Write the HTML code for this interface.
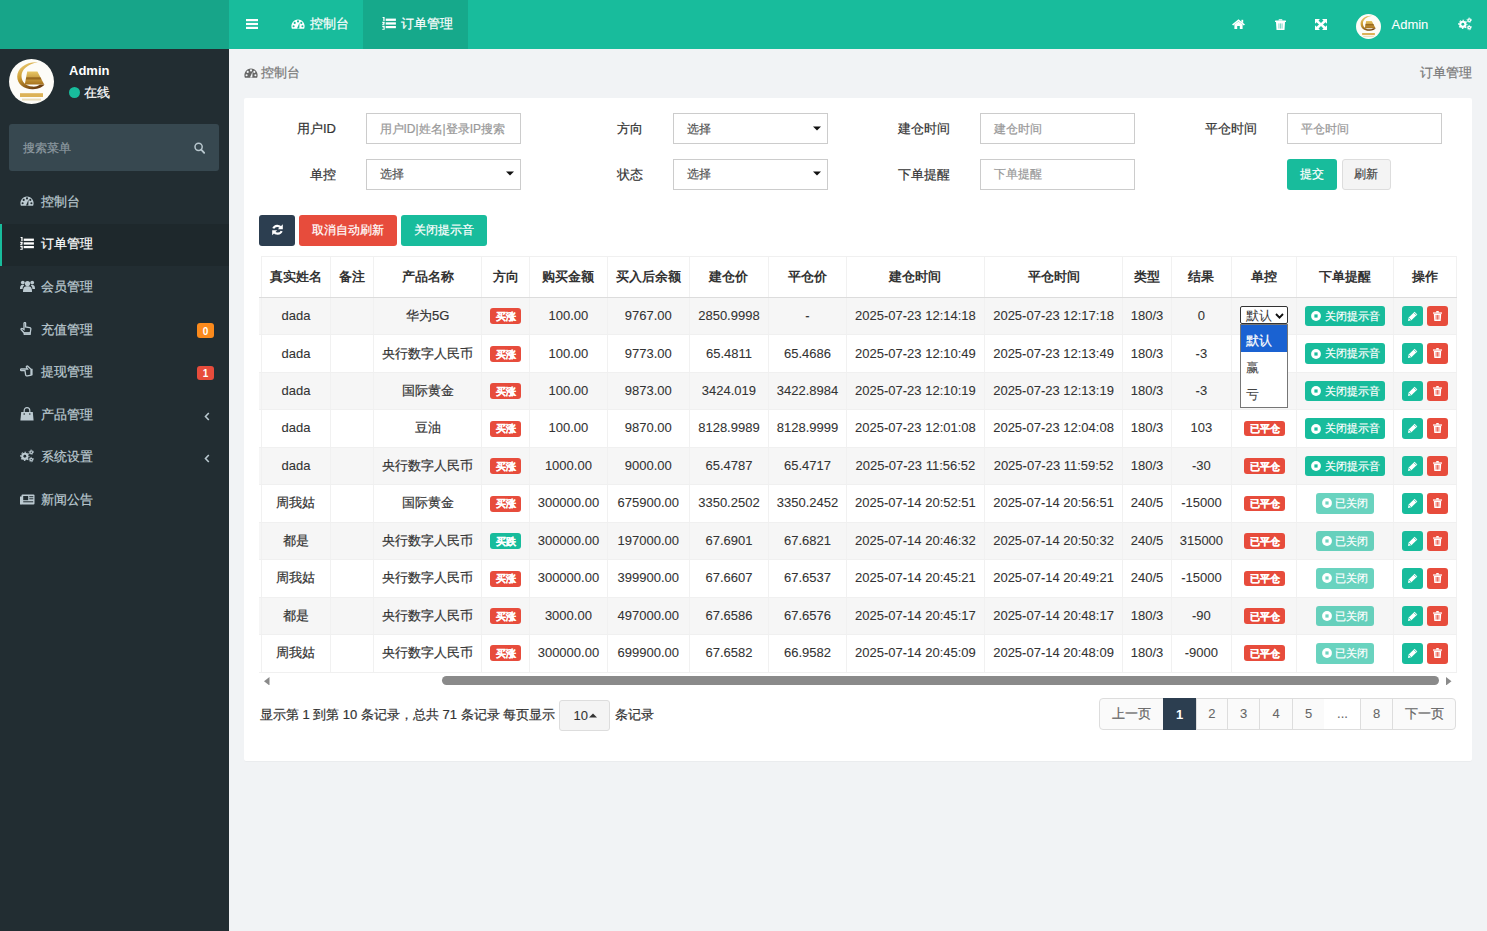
<!DOCTYPE html><html><head><meta charset="utf-8"><title>订单管理</title><style>
*{box-sizing:border-box;margin:0;padding:0}
html,body{width:1487px;height:931px;overflow:hidden;background:#f1f3f5;font-family:"Liberation Sans",sans-serif;font-size:13px;color:#333}
.a{position:absolute}
.t{position:absolute;white-space:nowrap;line-height:1;-webkit-text-stroke-width:0.2px}
svg{display:block;position:absolute}
.c{text-align:center}
.r{text-align:right}
</style></head><body>
<div class="a" style="left:0px;top:0px;width:229px;height:49px;background:#17a589"></div>
<div class="a" style="left:229px;top:0px;width:1258px;height:49px;background:#18bc9c"></div>
<div class="a" style="left:363px;top:0px;width:105px;height:49px;background:#16a98b"></div>
<svg style="left:246px;top:18.5px;" width="12" height="10" viewBox="0 0 12 10"><rect x="0" y="0" width="12" height="2.2" fill="#fff"/><rect x="0" y="3.9" width="12" height="2.2" fill="#fff"/><rect x="0" y="7.8" width="12" height="2.2" fill="#fff"/></svg>
<svg style="left:290.5px;top:19px;" width="14" height="10" viewBox="0 0 14 10"><path d="M0.9 9.7 A6.6 6.6 0 1 1 13.1 9.7 Z" fill="#fff"/><circle cx="2.6" cy="7.2" r="1.05" fill="#18bc9c"/><circle cx="3.7" cy="3.9" r="1.05" fill="#18bc9c"/><circle cx="7" cy="2.4" r="1.05" fill="#18bc9c"/><circle cx="10.3" cy="3.9" r="1.05" fill="#18bc9c"/><circle cx="11.4" cy="7.2" r="1.05" fill="#18bc9c"/><path d="M6 9.4 L8.6 3.6 L8.3 9.6 Z" fill="#18bc9c"/></svg>
<div class="t" style="left:309.5px;top:17.00px;font-size:13px;color:#fff;">控制台</div>
<svg style="left:381.5px;top:17px;" width="14" height="13" viewBox="0 0 14 13"><rect x="3.7" y="1.6" width="10.2" height="2.3" fill="#fff"/><rect x="3.7" y="5.3" width="10.2" height="2.3" fill="#fff"/><rect x="3.7" y="9" width="10.2" height="2.2" fill="#fff"/><path d="M0.6 0 L2.6 0 L2.6 4 L1.3 4 L1.3 1 L0.6 1 Z" fill="#fff"/><path d="M0.3 4.8 L2.7 4.8 L2.7 6.6 L1.4 7.4 L2.7 7.4 L2.7 8.3 L0.3 8.3 L0.3 7 L1.6 6.1 L0.3 6.1 Z" fill="#fff"/><path d="M0.3 9 L2.7 9 L2.7 12.8 L0 12.8 L0.6 11.8 L1.7 11.8 L1.7 11.1 L0.8 11.1 L0.8 10.5 L1.7 10.5 L1.7 9.9 L0.3 9.9 Z" fill="#fff"/></svg>
<div class="t" style="left:400.5px;top:17.00px;font-size:13px;color:#fff;">订单管理</div>
<svg style="left:1231.5px;top:19px;" width="13" height="10" viewBox="0 0 13 10"><path d="M6.5 0.2 L13 5.6 L11.8 6.6 L6.5 2.3 L1.2 6.6 L0 5.6 Z" fill="#fff"/><path d="M2.4 5.6 L6.5 2.4 L10.6 5.6 L10.6 10 L7.8 10 L7.8 7 L5.2 7 L5.2 10 L2.4 10 Z" fill="#fff"/><rect x="9.4" y="0.8" width="1.8" height="3" fill="#fff"/></svg>
<svg style="left:1275px;top:18.5px;" width="11" height="11" viewBox="0 0 11 11"><rect x="0" y="1.5" width="11" height="1.6" rx="0.5" fill="#fff"/><path d="M3.4 1.6 L3.9 0.2 L7.1 0.2 L7.6 1.6 Z" fill="#fff"/><path d="M1 3.1 L10 3.1 L9.5 11 L1.5 11 Z" fill="#fff"/><rect x="3.6" y="4.4" width="0.7" height="5.2" fill="#18bc9c" opacity="0.8"/><rect x="5.15" y="4.4" width="0.7" height="5.2" fill="#18bc9c" opacity="0.8"/><rect x="6.7" y="4.4" width="0.7" height="5.2" fill="#18bc9c" opacity="0.8"/></svg>
<svg style="left:1315px;top:18.5px;" width="12" height="11" viewBox="0 0 12 11"><path d="M0 0 L5 0 L3.5 1.5 L6 4 L8.5 1.5 L7 0 L12 0 L12 4.8 L10.5 3.3 L8 5.5 L10.5 7.7 L12 6.2 L12 11 L7 11 L8.5 9.5 L6 7 L3.5 9.5 L5 11 L0 11 L0 6.2 L1.5 7.7 L4 5.5 L1.5 3.3 L0 4.8 Z" fill="#fff"/></svg>
<svg style="left:1356px;top:14px" width="25" height="25" viewBox="0 0 45 45"><circle cx="22.5" cy="22.5" r="22.5" fill="#fdfcf8"/><defs><linearGradient id="gg" x1="0" y1="0" x2="0.6" y2="1"><stop offset="0" stop-color="#f3d98a"/><stop offset="0.45" stop-color="#cf9f34"/><stop offset="1" stop-color="#6e3f10"/></linearGradient><linearGradient id="gb" x1="0" y1="0" x2="0" y2="1"><stop offset="0" stop-color="#e9c766"/><stop offset="1" stop-color="#a8731c"/></linearGradient></defs><path d="M29 3.2 C17 2.5 8.2 9 8.2 17.5 C8.2 25.5 15.5 30.5 24 30.2 C30 30 33.5 28 35.5 25.5 L31 25.5 C28.5 27.3 26 27.8 23.5 27.6 C16.5 27.2 12.5 22.5 12.5 17 C12.5 10.5 18.5 5 29 3.2 Z" fill="url(#gg)"/><path d="M18.2 12.4 L28.4 12.4 L35.2 25.5 L15.8 25.5 Z" fill="url(#gb)"/><path d="M17.4 18.2 L31.4 18.2 L32.6 20.6 L16.8 20.6 Z" fill="#8a5a16" opacity="0.75"/><rect x="11" y="34.2" width="23" height="3.8" fill="#d6a53c" opacity="0.85"/><rect x="13" y="39.6" width="19" height="2" fill="#dcc58a" opacity="0.55"/></svg>
<div class="t" style="left:1391.5px;top:18.00px;font-size:13px;color:#fff;-webkit-text-stroke-width:0.08px;">Admin</div>
<svg style="left:1457.5px;top:17.3px;" width="14" height="14" viewBox="0 0 14.8 14"><circle cx="5.1" cy="7.3" r="3.85" fill="#fff"/><circle cx="5.1" cy="7.3" r="4.35" fill="none" stroke="#fff" stroke-width="1.1" stroke-dasharray="1.708 1.708" stroke-dashoffset="0.854"/><circle cx="5.1" cy="7.3" r="1.5" fill="#18bc9c"/><circle cx="11.9" cy="3.0" r="1.95" fill="#fff"/><circle cx="11.9" cy="3.0" r="2.35" fill="none" stroke="#fff" stroke-width="0.9" stroke-dasharray="1.230 1.230" stroke-dashoffset="0.615"/><circle cx="11.9" cy="3.0" r="0.7" fill="#18bc9c"/><circle cx="11.9" cy="10.8" r="1.95" fill="#fff"/><circle cx="11.9" cy="10.8" r="2.35" fill="none" stroke="#fff" stroke-width="0.9" stroke-dasharray="1.230 1.230" stroke-dashoffset="0.615"/><circle cx="11.9" cy="10.8" r="0.7" fill="#18bc9c"/></svg>
<div class="a" style="left:0px;top:49px;width:229px;height:882px;background:#222d32"></div>
<svg style="left:9px;top:58.8px" width="45" height="45" viewBox="0 0 45 45"><circle cx="22.5" cy="22.5" r="22.5" fill="#fdfcf8"/><defs><linearGradient id="gg" x1="0" y1="0" x2="0.6" y2="1"><stop offset="0" stop-color="#f3d98a"/><stop offset="0.45" stop-color="#cf9f34"/><stop offset="1" stop-color="#6e3f10"/></linearGradient><linearGradient id="gb" x1="0" y1="0" x2="0" y2="1"><stop offset="0" stop-color="#e9c766"/><stop offset="1" stop-color="#a8731c"/></linearGradient></defs><path d="M29 3.2 C17 2.5 8.2 9 8.2 17.5 C8.2 25.5 15.5 30.5 24 30.2 C30 30 33.5 28 35.5 25.5 L31 25.5 C28.5 27.3 26 27.8 23.5 27.6 C16.5 27.2 12.5 22.5 12.5 17 C12.5 10.5 18.5 5 29 3.2 Z" fill="url(#gg)"/><path d="M18.2 12.4 L28.4 12.4 L35.2 25.5 L15.8 25.5 Z" fill="url(#gb)"/><path d="M17.4 18.2 L31.4 18.2 L32.6 20.6 L16.8 20.6 Z" fill="#8a5a16" opacity="0.75"/><rect x="11" y="34.2" width="23" height="3.8" fill="#d6a53c" opacity="0.85"/><rect x="13" y="39.6" width="19" height="2" fill="#dcc58a" opacity="0.55"/></svg>
<div class="t" style="left:69px;top:64.00px;font-size:13px;color:#fff;font-weight:bold;-webkit-text-stroke-width:0;">Admin</div>
<div class="a" style="left:69px;top:87px;width:11px;height:11px;background:#18bc9c;border-radius:50%"></div>
<div class="t" style="left:83.5px;top:86.20px;font-size:13px;color:#fff;">在线</div>
<div class="a" style="left:9px;top:124px;width:210px;height:47px;background:#374850;border-radius:3px"></div>
<div class="t" style="left:23px;top:141.70px;font-size:12px;color:#8e9aa0;">搜索菜单</div>
<svg style="left:194px;top:141.5px;" width="11" height="12" viewBox="0 0 11 12"><circle cx="4.6" cy="4.8" r="3.6" fill="none" stroke="#b8c7ce" stroke-width="1.5"/><path d="M7.2 7.6 L10.2 10.8" stroke="#b8c7ce" stroke-width="1.9" stroke-linecap="round"/></svg>
<svg style="left:20px;top:195.8px;" width="14" height="10" viewBox="0 0 14 10"><path d="M0.9 9.7 A6.6 6.6 0 1 1 13.1 9.7 Z" fill="#bccad1"/><circle cx="2.6" cy="7.2" r="1.05" fill="#222d32"/><circle cx="3.7" cy="3.9" r="1.05" fill="#222d32"/><circle cx="7" cy="2.4" r="1.05" fill="#222d32"/><circle cx="10.3" cy="3.9" r="1.05" fill="#222d32"/><circle cx="11.4" cy="7.2" r="1.05" fill="#222d32"/><path d="M6 9.4 L8.6 3.6 L8.3 9.6 Z" fill="#222d32"/></svg>
<div class="t" style="left:41px;top:194.80px;font-size:13px;color:#bccad1;">控制台</div>
<div class="a" style="left:0px;top:223.7px;width:229px;height:42.4px;background:#1e282c"></div>
<div class="a" style="left:0px;top:223.7px;width:2px;height:42.4px;background:#18bc9c"></div>
<svg style="left:20px;top:237.4px;" width="14" height="13" viewBox="0 0 14 13"><rect x="3.7" y="1.6" width="10.2" height="2.3" fill="#fff"/><rect x="3.7" y="5.3" width="10.2" height="2.3" fill="#fff"/><rect x="3.7" y="9" width="10.2" height="2.2" fill="#fff"/><path d="M0.6 0 L2.6 0 L2.6 4 L1.3 4 L1.3 1 L0.6 1 Z" fill="#fff"/><path d="M0.3 4.8 L2.7 4.8 L2.7 6.6 L1.4 7.4 L2.7 7.4 L2.7 8.3 L0.3 8.3 L0.3 7 L1.6 6.1 L0.3 6.1 Z" fill="#fff"/><path d="M0.3 9 L2.7 9 L2.7 12.8 L0 12.8 L0.6 11.8 L1.7 11.8 L1.7 11.1 L0.8 11.1 L0.8 10.5 L1.7 10.5 L1.7 9.9 L0.3 9.9 Z" fill="#fff"/></svg>
<div class="t" style="left:41px;top:237.40px;font-size:13px;color:#fff;">订单管理</div>
<svg style="left:20px;top:280.0px;" width="15" height="12" viewBox="0 0 15 12"><circle cx="7.5" cy="3.6" r="2.6" fill="#bccad1"/><path d="M3 12 C3 7 4.5 6.3 7.5 6.3 C10.5 6.3 12 7 12 12 Z" fill="#bccad1"/><circle cx="2.8" cy="2.6" r="1.9" fill="#bccad1"/><path d="M0 9 C0 5.5 1 5 2.8 5 C3.6 5 4 5.2 4.2 5.4 C3 6.2 2.6 7.5 2.6 9 Z" fill="#bccad1"/><circle cx="12.2" cy="2.6" r="1.9" fill="#bccad1"/><path d="M15 9 C15 5.5 14 5 12.2 5 C11.4 5 11 5.2 10.8 5.4 C12 6.2 12.4 7.5 12.4 9 Z" fill="#bccad1"/></svg>
<div class="t" style="left:41px;top:280.00px;font-size:13px;color:#bccad1;">会员管理</div>
<svg style="left:20px;top:322.1px;" width="12" height="13" viewBox="0 0 12 13"><path d="M4 1.2 C4 0.3 5.6 0.3 5.6 1.2 L5.6 5 L9.6 5.6 C10.8 5.8 11 6.4 10.8 7.5 L10.2 11 L4.2 11 L1.3 7.8 C0.6 7 1.4 6 2.3 6.5 L4 7.6 Z" fill="none" stroke="#bccad1" stroke-width="1.3"/><rect x="4.2" y="11" width="6" height="1.6" fill="none" stroke="#bccad1" stroke-width="1.1"/></svg>
<div class="t" style="left:41px;top:322.60px;font-size:13px;color:#bccad1;">充值管理</div>
<div class="a" style="left:197px;top:323px;width:17px;height:15px;background:#fb8a1c;border-radius:3px"></div>
<div class="t c" style="left:197px;top:326.50px;font-size:10px;color:#fff;font-weight:bold;-webkit-text-stroke-width:0;width:17px;">0</div>
<svg style="left:20px;top:365.20000000000005px;" width="13" height="12" viewBox="0 0 13 12"><path d="M1.2 4 C0.3 4 0.3 5.6 1.2 5.6 L5 5.6 L5.6 9.6 C5.8 10.8 6.4 11 7.5 10.8 L11 10.2 L11 4.2 L7.8 1.3 C7 0.6 6 1.4 6.5 2.3 L7.6 4 Z" fill="none" stroke="#bccad1" stroke-width="1.3"/><rect x="11" y="3.8" width="1.6" height="6.5" fill="#bccad1"/></svg>
<div class="t" style="left:41px;top:365.20px;font-size:13px;color:#bccad1;">提现管理</div>
<div class="a" style="left:197px;top:366px;width:17px;height:14px;background:#e74c3c;border-radius:3px"></div>
<div class="t c" style="left:197px;top:369.00px;font-size:10px;color:#fff;font-weight:bold;-webkit-text-stroke-width:0;width:17px;">1</div>
<svg style="left:20px;top:406.8px;" width="14" height="14" viewBox="0 0 14 14"><path d="M1.2 5 L12.8 5 L13.6 13.5 L0.4 13.5 Z" fill="#bccad1"/><path d="M4.2 6.5 L4.2 3.6 C4.2 1.6 5.4 0.6 7 0.6 C8.6 0.6 9.8 1.6 9.8 3.6 L9.8 6.5" fill="none" stroke="#bccad1" stroke-width="1.2"/><circle cx="4.2" cy="7" r="0.8" fill="#222d32"/><circle cx="9.8" cy="7" r="0.8" fill="#222d32"/></svg>
<div class="t" style="left:41px;top:407.80px;font-size:13px;color:#bccad1;">产品管理</div>
<svg style="left:204px;top:411.8px;" width="6" height="9" viewBox="0 0 6 9"><path d="M4.8 1 L1.5 4.5 L4.8 8" fill="none" stroke="#b8c7ce" stroke-width="1.6"/></svg>
<svg style="left:20px;top:449.40000000000003px;" width="14" height="14" viewBox="0 0 14.8 14"><circle cx="5.1" cy="7.3" r="3.85" fill="#bccad1"/><circle cx="5.1" cy="7.3" r="4.35" fill="none" stroke="#bccad1" stroke-width="1.1" stroke-dasharray="1.708 1.708" stroke-dashoffset="0.854"/><circle cx="5.1" cy="7.3" r="1.5" fill="#222d32"/><circle cx="11.9" cy="3.0" r="1.95" fill="#bccad1"/><circle cx="11.9" cy="3.0" r="2.35" fill="none" stroke="#bccad1" stroke-width="0.9" stroke-dasharray="1.230 1.230" stroke-dashoffset="0.615"/><circle cx="11.9" cy="3.0" r="0.7" fill="#222d32"/><circle cx="11.9" cy="10.8" r="1.95" fill="#bccad1"/><circle cx="11.9" cy="10.8" r="2.35" fill="none" stroke="#bccad1" stroke-width="0.9" stroke-dasharray="1.230 1.230" stroke-dashoffset="0.615"/><circle cx="11.9" cy="10.8" r="0.7" fill="#222d32"/></svg>
<div class="t" style="left:41px;top:450.40px;font-size:13px;color:#bccad1;">系统设置</div>
<svg style="left:204px;top:454.40000000000003px;" width="6" height="9" viewBox="0 0 6 9"><path d="M4.8 1 L1.5 4.5 L4.8 8" fill="none" stroke="#b8c7ce" stroke-width="1.6"/></svg>
<svg style="left:20px;top:493.5px;" width="15" height="11" viewBox="0 0 15 11"><rect x="1.5" y="0.5" width="13" height="10" rx="1" fill="#bccad1"/><rect x="0" y="2.5" width="2" height="8" fill="#bccad1"/><rect x="3.2" y="2" width="5" height="4.2" fill="#222d32"/><rect x="9.3" y="2.2" width="4" height="1" fill="#222d32"/><rect x="9.3" y="4.3" width="4" height="1" fill="#222d32"/><rect x="3.2" y="7.3" width="10" height="1" fill="#222d32"/></svg>
<div class="t" style="left:41px;top:493.00px;font-size:13px;color:#bccad1;">新闻公告</div>
<svg style="left:244px;top:68px;" width="14" height="10" viewBox="0 0 14 10"><path d="M0.9 9.7 A6.6 6.6 0 1 1 13.1 9.7 Z" fill="#666"/><circle cx="2.6" cy="7.2" r="1.05" fill="#f1f4f6"/><circle cx="3.7" cy="3.9" r="1.05" fill="#f1f4f6"/><circle cx="7" cy="2.4" r="1.05" fill="#f1f4f6"/><circle cx="10.3" cy="3.9" r="1.05" fill="#f1f4f6"/><circle cx="11.4" cy="7.2" r="1.05" fill="#f1f4f6"/><path d="M6 9.4 L8.6 3.6 L8.3 9.6 Z" fill="#f1f4f6"/></svg>
<div class="t" style="left:261px;top:66.00px;font-size:13px;color:#777;">控制台</div>
<div class="t" style="right:15px;top:66.00px;font-size:13px;color:#777;">订单管理</div>
<div class="a" style="left:244px;top:98px;width:1228px;height:663px;background:#fff;border-radius:2px;box-shadow:0 1px 1px rgba(0,0,0,.03)"></div>
<div class="t" style="right:1151px;top:122.00px;font-size:13px;color:#333;">用户ID</div>
<div class="a" style="left:366px;top:113px;width:155px;height:31px;border:1px solid #ccc;background:#fff"></div>
<div class="t" style="left:379.5px;top:122.50px;font-size:12px;color:#999;">用户ID|姓名|登录IP搜索</div>
<div class="t" style="right:1151px;top:167.80px;font-size:13px;color:#333;">单控</div>
<div class="a" style="left:366px;top:159px;width:155px;height:31px;border:1px solid #ccc;background:#fff"></div>
<div class="t" style="left:379.5px;top:168.30px;font-size:12px;color:#555;">选择</div>
<svg style="left:506px;top:171.3px;" width="8" height="5" viewBox="0 0 8 5"><path d="M0 0.5 L8 0.5 L4 4.5 Z" fill="#111"/></svg>
<div class="t" style="right:844px;top:122.00px;font-size:13px;color:#333;">方向</div>
<div class="a" style="left:673px;top:113px;width:155px;height:31px;border:1px solid #ccc;background:#fff"></div>
<div class="t" style="left:686.5px;top:122.50px;font-size:12px;color:#555;">选择</div>
<svg style="left:813px;top:125.5px;" width="8" height="5" viewBox="0 0 8 5"><path d="M0 0.5 L8 0.5 L4 4.5 Z" fill="#111"/></svg>
<div class="t" style="right:844px;top:167.80px;font-size:13px;color:#333;">状态</div>
<div class="a" style="left:673px;top:159px;width:155px;height:31px;border:1px solid #ccc;background:#fff"></div>
<div class="t" style="left:686.5px;top:168.30px;font-size:12px;color:#555;">选择</div>
<svg style="left:813px;top:171.3px;" width="8" height="5" viewBox="0 0 8 5"><path d="M0 0.5 L8 0.5 L4 4.5 Z" fill="#111"/></svg>
<div class="t" style="right:537px;top:122.00px;font-size:13px;color:#333;">建仓时间</div>
<div class="a" style="left:980px;top:113px;width:155px;height:31px;border:1px solid #ccc;background:#fff"></div>
<div class="t" style="left:993.5px;top:122.50px;font-size:12px;color:#999;">建仓时间</div>
<div class="t" style="right:537px;top:167.80px;font-size:13px;color:#333;">下单提醒</div>
<div class="a" style="left:980px;top:159px;width:155px;height:31px;border:1px solid #ccc;background:#fff"></div>
<div class="t" style="left:993.5px;top:168.30px;font-size:12px;color:#999;">下单提醒</div>
<div class="t" style="right:230px;top:122.00px;font-size:13px;color:#333;">平仓时间</div>
<div class="a" style="left:1287px;top:113px;width:155px;height:31px;border:1px solid #ccc;background:#fff"></div>
<div class="t" style="left:1300.5px;top:122.50px;font-size:12px;color:#999;">平仓时间</div>
<div class="a" style="left:1287px;top:159px;width:50px;height:31px;background:#18bc9c;border-radius:3px"></div>
<div class="t c" style="left:1287px;top:167.90px;font-size:12px;color:#fff;width:50px;">提交</div>
<div class="a" style="left:1341.5px;top:159px;width:49.5px;height:31px;background:#f4f4f4;border:1px solid #ddd;border-radius:3px"></div>
<div class="t c" style="left:1341.5px;top:167.90px;font-size:12px;color:#444;width:49.5px;">刷新</div>
<div class="a" style="left:259px;top:215px;width:36px;height:30.5px;background:#2c3e50;border-radius:3px"></div>
<svg style="left:271.5px;top:224px;" width="11" height="11.5" viewBox="0 0 11 11.5"><path d="M9.2 3.9 A4.5 4.5 0 0 0 1.3 4.4" fill="none" stroke="#fff" stroke-width="2.2"/><path d="M10.8 0.2 L10.8 5.3 L5.8 5.3 Z" fill="#fff"/><path d="M1.8 7.6 A4.5 4.5 0 0 0 9.7 7.1" fill="none" stroke="#fff" stroke-width="2.2"/><path d="M0.2 11.3 L0.2 6.2 L5.2 6.2 Z" fill="#fff"/></svg>
<div class="a" style="left:299px;top:215px;width:98px;height:30.5px;background:#e74c3c;border-radius:3px"></div>
<div class="t c" style="left:299px;top:224.30px;font-size:12px;color:#fff;width:98px;">取消自动刷新</div>
<div class="a" style="left:401.3px;top:215px;width:85.7px;height:30.5px;background:#18bc9c;border-radius:3px"></div>
<div class="t c" style="left:401.3px;top:224.30px;font-size:12px;color:#fff;width:85.7px;">关闭提示音</div>
<div class="a" style="left:259px;top:297.30px;width:1197.5px;height:37.47px;background:#f6f6f6"></div>
<div class="a" style="left:259px;top:372.24px;width:1197.5px;height:37.47px;background:#f6f6f6"></div>
<div class="a" style="left:259px;top:447.18px;width:1197.5px;height:37.47px;background:#f6f6f6"></div>
<div class="a" style="left:259px;top:522.12px;width:1197.5px;height:37.47px;background:#f6f6f6"></div>
<div class="a" style="left:259px;top:597.06px;width:1197.5px;height:37.47px;background:#f6f6f6"></div>
<div class="a" style="left:260.80px;top:256px;width:1px;height:416px;background:#f1f1f1"></div>
<div class="a" style="left:330.10px;top:256px;width:1px;height:416px;background:#f1f1f1"></div>
<div class="a" style="left:373.20px;top:256px;width:1px;height:416px;background:#f1f1f1"></div>
<div class="a" style="left:481.10px;top:256px;width:1px;height:416px;background:#f1f1f1"></div>
<div class="a" style="left:529.00px;top:256px;width:1px;height:416px;background:#f1f1f1"></div>
<div class="a" style="left:606.80px;top:256px;width:1px;height:416px;background:#f1f1f1"></div>
<div class="a" style="left:688.70px;top:256px;width:1px;height:416px;background:#f1f1f1"></div>
<div class="a" style="left:768.20px;top:256px;width:1px;height:416px;background:#f1f1f1"></div>
<div class="a" style="left:845.80px;top:256px;width:1px;height:416px;background:#f1f1f1"></div>
<div class="a" style="left:984.10px;top:256px;width:1px;height:416px;background:#f1f1f1"></div>
<div class="a" style="left:1122.00px;top:256px;width:1px;height:416px;background:#f1f1f1"></div>
<div class="a" style="left:1171.00px;top:256px;width:1px;height:416px;background:#f1f1f1"></div>
<div class="a" style="left:1230.80px;top:256px;width:1px;height:416px;background:#f1f1f1"></div>
<div class="a" style="left:1296.00px;top:256px;width:1px;height:416px;background:#f1f1f1"></div>
<div class="a" style="left:1393.00px;top:256px;width:1px;height:416px;background:#f1f1f1"></div>
<div class="a" style="left:1456.00px;top:256px;width:1px;height:416px;background:#f1f1f1"></div>
<div class="a" style="left:261.3px;top:256px;width:1195.2px;height:1px;background:#f0f0f0"></div>
<div class="a" style="left:259px;top:296.5px;width:1197.5px;height:1px;background:#dcdcdc"></div>
<div class="a" style="left:259px;top:334.27px;width:1197.5px;height:1px;background:#f0f0f0"></div>
<div class="a" style="left:259px;top:371.74px;width:1197.5px;height:1px;background:#f0f0f0"></div>
<div class="a" style="left:259px;top:409.21px;width:1197.5px;height:1px;background:#f0f0f0"></div>
<div class="a" style="left:259px;top:446.68px;width:1197.5px;height:1px;background:#f0f0f0"></div>
<div class="a" style="left:259px;top:484.15px;width:1197.5px;height:1px;background:#f0f0f0"></div>
<div class="a" style="left:259px;top:521.62px;width:1197.5px;height:1px;background:#f0f0f0"></div>
<div class="a" style="left:259px;top:559.09px;width:1197.5px;height:1px;background:#f0f0f0"></div>
<div class="a" style="left:259px;top:596.56px;width:1197.5px;height:1px;background:#f0f0f0"></div>
<div class="a" style="left:259px;top:634.03px;width:1197.5px;height:1px;background:#f0f0f0"></div>
<div class="a" style="left:259px;top:671.50px;width:1197.5px;height:1px;background:#f0f0f0"></div>
<div class="t c" style="left:261.30px;top:269.60px;font-size:13px;color:#333;font-weight:bold;-webkit-text-stroke-width:0;width:69.30px;">真实姓名</div>
<div class="t c" style="left:330.60px;top:269.60px;font-size:13px;color:#333;font-weight:bold;-webkit-text-stroke-width:0;width:43.10px;">备注</div>
<div class="t c" style="left:373.70px;top:269.60px;font-size:13px;color:#333;font-weight:bold;-webkit-text-stroke-width:0;width:107.90px;">产品名称</div>
<div class="t c" style="left:481.60px;top:269.60px;font-size:13px;color:#333;font-weight:bold;-webkit-text-stroke-width:0;width:47.90px;">方向</div>
<div class="t c" style="left:529.50px;top:269.60px;font-size:13px;color:#333;font-weight:bold;-webkit-text-stroke-width:0;width:77.80px;">购买金额</div>
<div class="t c" style="left:607.30px;top:269.60px;font-size:13px;color:#333;font-weight:bold;-webkit-text-stroke-width:0;width:81.90px;">买入后余额</div>
<div class="t c" style="left:689.20px;top:269.60px;font-size:13px;color:#333;font-weight:bold;-webkit-text-stroke-width:0;width:79.50px;">建仓价</div>
<div class="t c" style="left:768.70px;top:269.60px;font-size:13px;color:#333;font-weight:bold;-webkit-text-stroke-width:0;width:77.60px;">平仓价</div>
<div class="t c" style="left:846.30px;top:269.60px;font-size:13px;color:#333;font-weight:bold;-webkit-text-stroke-width:0;width:138.30px;">建仓时间</div>
<div class="t c" style="left:984.60px;top:269.60px;font-size:13px;color:#333;font-weight:bold;-webkit-text-stroke-width:0;width:137.90px;">平仓时间</div>
<div class="t c" style="left:1122.50px;top:269.60px;font-size:13px;color:#333;font-weight:bold;-webkit-text-stroke-width:0;width:49.00px;">类型</div>
<div class="t c" style="left:1171.50px;top:269.60px;font-size:13px;color:#333;font-weight:bold;-webkit-text-stroke-width:0;width:59.80px;">结果</div>
<div class="t c" style="left:1231.30px;top:269.60px;font-size:13px;color:#333;font-weight:bold;-webkit-text-stroke-width:0;width:65.20px;">单控</div>
<div class="t c" style="left:1296.50px;top:269.60px;font-size:13px;color:#333;font-weight:bold;-webkit-text-stroke-width:0;width:97.00px;">下单提醒</div>
<div class="t c" style="left:1393.50px;top:269.60px;font-size:13px;color:#333;font-weight:bold;-webkit-text-stroke-width:0;width:63.00px;">操作</div>
<div class="t c" style="left:261.30px;top:309.04px;font-size:13px;color:#333;width:69.30px;-webkit-text-stroke-width:0.08px;">dada</div>
<div class="t c" style="left:373.70px;top:309.04px;font-size:13px;color:#333;width:107.90px;">华为5G</div>
<div class="a" style="left:490.05px;top:308.24px;width:31px;height:16px;background:#e74c3c;border-radius:3px"></div>
<div class="t c" style="left:490.05px;top:312.04px;font-size:10px;color:#fff;font-weight:bold;-webkit-text-stroke-width:0;width:31px;-webkit-text-stroke-width:0.25px;">买涨</div>
<div class="t c" style="left:529.50px;top:309.04px;font-size:13px;color:#333;width:77.80px;-webkit-text-stroke-width:0.08px;">100.00</div>
<div class="t c" style="left:607.30px;top:309.04px;font-size:13px;color:#333;width:81.90px;-webkit-text-stroke-width:0.08px;">9767.00</div>
<div class="t c" style="left:689.20px;top:309.04px;font-size:13px;color:#333;width:79.50px;-webkit-text-stroke-width:0.08px;">2850.9998</div>
<div class="t c" style="left:768.70px;top:309.04px;font-size:13px;color:#333;width:77.60px;-webkit-text-stroke-width:0.08px;">-</div>
<div class="t c" style="left:846.30px;top:309.04px;font-size:13px;color:#333;width:138.30px;-webkit-text-stroke-width:0.08px;">2025-07-23 12:14:18</div>
<div class="t c" style="left:984.60px;top:309.04px;font-size:13px;color:#333;width:137.90px;-webkit-text-stroke-width:0.08px;">2025-07-23 12:17:18</div>
<div class="t c" style="left:1122.50px;top:309.04px;font-size:13px;color:#333;width:49.00px;-webkit-text-stroke-width:0.08px;">180/3</div>
<div class="t c" style="left:1171.50px;top:309.04px;font-size:13px;color:#333;width:59.80px;-webkit-text-stroke-width:0.08px;">0</div>
<div class="a" style="left:1305px;top:305.84px;width:80px;height:20.5px;background:#18bc9c;border-radius:3px"></div>
<svg style="left:1311.3px;top:311.14px;" width="10" height="10" viewBox="0 0 10 10"><circle cx="5" cy="5" r="4.9" fill="#fff"/><rect x="3.4" y="3.4" width="3.2" height="3.2" fill="#18bc9c"/></svg>
<div class="t" style="left:1324.5px;top:310.74px;font-size:11px;color:#fff;">关闭提示音</div>
<div class="a" style="left:1402.3px;top:305.74px;width:20.7px;height:20.7px;background:#18bc9c;border-radius:3px"></div>
<svg style="left:1408px;top:310.74px;" width="10" height="10" viewBox="0 0 10 10"><path d="M0 10 L0.7 6.6 L6.6 0.7 L9.3 3.4 L3.4 9.3 Z" fill="#fff"/><path d="M0.9 7 L3 9.1" stroke="#18bc9c" stroke-width="0.7"/><path d="M6 1.8 L8.2 4" stroke="#18bc9c" stroke-width="0.7"/></svg>
<div class="a" style="left:1427.3px;top:305.74px;width:20.7px;height:20.7px;background:#e74c3c;border-radius:3px"></div>
<svg style="left:1433px;top:310.84px;" width="9" height="10" viewBox="0 0 9 10"><rect x="0" y="1.4" width="9" height="1.3" fill="#fff"/><path d="M3 1.4 L3.4 0 L5.6 0 L6 1.4 Z" fill="#fff"/><path d="M0.8 2.9 L8.2 2.9 L7.7 10 L1.3 10 Z" fill="#fff"/><rect x="2.7" y="4" width="0.8" height="4.6" fill="#e74c3c"/><rect x="4.1" y="4" width="0.8" height="4.6" fill="#e74c3c"/><rect x="5.5" y="4" width="0.8" height="4.6" fill="#e74c3c"/></svg>
<div class="t c" style="left:261.30px;top:346.50px;font-size:13px;color:#333;width:69.30px;-webkit-text-stroke-width:0.08px;">dada</div>
<div class="t c" style="left:373.70px;top:346.50px;font-size:13px;color:#333;width:107.90px;">央行数字人民币</div>
<div class="a" style="left:490.05px;top:345.70px;width:31px;height:16px;background:#e74c3c;border-radius:3px"></div>
<div class="t c" style="left:490.05px;top:349.50px;font-size:10px;color:#fff;font-weight:bold;-webkit-text-stroke-width:0;width:31px;-webkit-text-stroke-width:0.25px;">买涨</div>
<div class="t c" style="left:529.50px;top:346.50px;font-size:13px;color:#333;width:77.80px;-webkit-text-stroke-width:0.08px;">100.00</div>
<div class="t c" style="left:607.30px;top:346.50px;font-size:13px;color:#333;width:81.90px;-webkit-text-stroke-width:0.08px;">9773.00</div>
<div class="t c" style="left:689.20px;top:346.50px;font-size:13px;color:#333;width:79.50px;-webkit-text-stroke-width:0.08px;">65.4811</div>
<div class="t c" style="left:768.70px;top:346.50px;font-size:13px;color:#333;width:77.60px;-webkit-text-stroke-width:0.08px;">65.4686</div>
<div class="t c" style="left:846.30px;top:346.50px;font-size:13px;color:#333;width:138.30px;-webkit-text-stroke-width:0.08px;">2025-07-23 12:10:49</div>
<div class="t c" style="left:984.60px;top:346.50px;font-size:13px;color:#333;width:137.90px;-webkit-text-stroke-width:0.08px;">2025-07-23 12:13:49</div>
<div class="t c" style="left:1122.50px;top:346.50px;font-size:13px;color:#333;width:49.00px;-webkit-text-stroke-width:0.08px;">180/3</div>
<div class="t c" style="left:1171.50px;top:346.50px;font-size:13px;color:#333;width:59.80px;-webkit-text-stroke-width:0.08px;">-3</div>
<div class="a" style="left:1305px;top:343.31px;width:80px;height:20.5px;background:#18bc9c;border-radius:3px"></div>
<svg style="left:1311.3px;top:348.61px;" width="10" height="10" viewBox="0 0 10 10"><circle cx="5" cy="5" r="4.9" fill="#fff"/><rect x="3.4" y="3.4" width="3.2" height="3.2" fill="#18bc9c"/></svg>
<div class="t" style="left:1324.5px;top:348.20px;font-size:11px;color:#fff;">关闭提示音</div>
<div class="a" style="left:1402.3px;top:343.20px;width:20.7px;height:20.7px;background:#18bc9c;border-radius:3px"></div>
<svg style="left:1408px;top:348.20px;" width="10" height="10" viewBox="0 0 10 10"><path d="M0 10 L0.7 6.6 L6.6 0.7 L9.3 3.4 L3.4 9.3 Z" fill="#fff"/><path d="M0.9 7 L3 9.1" stroke="#18bc9c" stroke-width="0.7"/><path d="M6 1.8 L8.2 4" stroke="#18bc9c" stroke-width="0.7"/></svg>
<div class="a" style="left:1427.3px;top:343.20px;width:20.7px;height:20.7px;background:#e74c3c;border-radius:3px"></div>
<svg style="left:1433px;top:348.31px;" width="9" height="10" viewBox="0 0 9 10"><rect x="0" y="1.4" width="9" height="1.3" fill="#fff"/><path d="M3 1.4 L3.4 0 L5.6 0 L6 1.4 Z" fill="#fff"/><path d="M0.8 2.9 L8.2 2.9 L7.7 10 L1.3 10 Z" fill="#fff"/><rect x="2.7" y="4" width="0.8" height="4.6" fill="#e74c3c"/><rect x="4.1" y="4" width="0.8" height="4.6" fill="#e74c3c"/><rect x="5.5" y="4" width="0.8" height="4.6" fill="#e74c3c"/></svg>
<div class="t c" style="left:261.30px;top:383.98px;font-size:13px;color:#333;width:69.30px;-webkit-text-stroke-width:0.08px;">dada</div>
<div class="t c" style="left:373.70px;top:383.98px;font-size:13px;color:#333;width:107.90px;">国际黄金</div>
<div class="a" style="left:490.05px;top:383.18px;width:31px;height:16px;background:#e74c3c;border-radius:3px"></div>
<div class="t c" style="left:490.05px;top:386.98px;font-size:10px;color:#fff;font-weight:bold;-webkit-text-stroke-width:0;width:31px;-webkit-text-stroke-width:0.25px;">买涨</div>
<div class="t c" style="left:529.50px;top:383.98px;font-size:13px;color:#333;width:77.80px;-webkit-text-stroke-width:0.08px;">100.00</div>
<div class="t c" style="left:607.30px;top:383.98px;font-size:13px;color:#333;width:81.90px;-webkit-text-stroke-width:0.08px;">9873.00</div>
<div class="t c" style="left:689.20px;top:383.98px;font-size:13px;color:#333;width:79.50px;-webkit-text-stroke-width:0.08px;">3424.019</div>
<div class="t c" style="left:768.70px;top:383.98px;font-size:13px;color:#333;width:77.60px;-webkit-text-stroke-width:0.08px;">3422.8984</div>
<div class="t c" style="left:846.30px;top:383.98px;font-size:13px;color:#333;width:138.30px;-webkit-text-stroke-width:0.08px;">2025-07-23 12:10:19</div>
<div class="t c" style="left:984.60px;top:383.98px;font-size:13px;color:#333;width:137.90px;-webkit-text-stroke-width:0.08px;">2025-07-23 12:13:19</div>
<div class="t c" style="left:1122.50px;top:383.98px;font-size:13px;color:#333;width:49.00px;-webkit-text-stroke-width:0.08px;">180/3</div>
<div class="t c" style="left:1171.50px;top:383.98px;font-size:13px;color:#333;width:59.80px;-webkit-text-stroke-width:0.08px;">-3</div>
<div class="a" style="left:1305px;top:380.78px;width:80px;height:20.5px;background:#18bc9c;border-radius:3px"></div>
<svg style="left:1311.3px;top:386.08px;" width="10" height="10" viewBox="0 0 10 10"><circle cx="5" cy="5" r="4.9" fill="#fff"/><rect x="3.4" y="3.4" width="3.2" height="3.2" fill="#18bc9c"/></svg>
<div class="t" style="left:1324.5px;top:385.68px;font-size:11px;color:#fff;">关闭提示音</div>
<div class="a" style="left:1402.3px;top:380.68px;width:20.7px;height:20.7px;background:#18bc9c;border-radius:3px"></div>
<svg style="left:1408px;top:385.68px;" width="10" height="10" viewBox="0 0 10 10"><path d="M0 10 L0.7 6.6 L6.6 0.7 L9.3 3.4 L3.4 9.3 Z" fill="#fff"/><path d="M0.9 7 L3 9.1" stroke="#18bc9c" stroke-width="0.7"/><path d="M6 1.8 L8.2 4" stroke="#18bc9c" stroke-width="0.7"/></svg>
<div class="a" style="left:1427.3px;top:380.68px;width:20.7px;height:20.7px;background:#e74c3c;border-radius:3px"></div>
<svg style="left:1433px;top:385.78px;" width="9" height="10" viewBox="0 0 9 10"><rect x="0" y="1.4" width="9" height="1.3" fill="#fff"/><path d="M3 1.4 L3.4 0 L5.6 0 L6 1.4 Z" fill="#fff"/><path d="M0.8 2.9 L8.2 2.9 L7.7 10 L1.3 10 Z" fill="#fff"/><rect x="2.7" y="4" width="0.8" height="4.6" fill="#e74c3c"/><rect x="4.1" y="4" width="0.8" height="4.6" fill="#e74c3c"/><rect x="5.5" y="4" width="0.8" height="4.6" fill="#e74c3c"/></svg>
<div class="t c" style="left:261.30px;top:421.45px;font-size:13px;color:#333;width:69.30px;-webkit-text-stroke-width:0.08px;">dada</div>
<div class="t c" style="left:373.70px;top:421.45px;font-size:13px;color:#333;width:107.90px;">豆油</div>
<div class="a" style="left:490.05px;top:420.65px;width:31px;height:16px;background:#e74c3c;border-radius:3px"></div>
<div class="t c" style="left:490.05px;top:424.45px;font-size:10px;color:#fff;font-weight:bold;-webkit-text-stroke-width:0;width:31px;-webkit-text-stroke-width:0.25px;">买涨</div>
<div class="t c" style="left:529.50px;top:421.45px;font-size:13px;color:#333;width:77.80px;-webkit-text-stroke-width:0.08px;">100.00</div>
<div class="t c" style="left:607.30px;top:421.45px;font-size:13px;color:#333;width:81.90px;-webkit-text-stroke-width:0.08px;">9870.00</div>
<div class="t c" style="left:689.20px;top:421.45px;font-size:13px;color:#333;width:79.50px;-webkit-text-stroke-width:0.08px;">8128.9989</div>
<div class="t c" style="left:768.70px;top:421.45px;font-size:13px;color:#333;width:77.60px;-webkit-text-stroke-width:0.08px;">8128.9999</div>
<div class="t c" style="left:846.30px;top:421.45px;font-size:13px;color:#333;width:138.30px;-webkit-text-stroke-width:0.08px;">2025-07-23 12:01:08</div>
<div class="t c" style="left:984.60px;top:421.45px;font-size:13px;color:#333;width:137.90px;-webkit-text-stroke-width:0.08px;">2025-07-23 12:04:08</div>
<div class="t c" style="left:1122.50px;top:421.45px;font-size:13px;color:#333;width:49.00px;-webkit-text-stroke-width:0.08px;">180/3</div>
<div class="t c" style="left:1171.50px;top:421.45px;font-size:13px;color:#333;width:59.80px;-webkit-text-stroke-width:0.08px;">103</div>
<div class="a" style="left:1244px;top:420.65px;width:41px;height:15.6px;background:#e74c3c;border-radius:3px"></div>
<div class="t c" style="left:1244px;top:424.45px;font-size:10px;color:#fff;font-weight:bold;-webkit-text-stroke-width:0;width:41px;-webkit-text-stroke-width:0.25px;">已平仓</div>
<div class="a" style="left:1305px;top:418.25px;width:80px;height:20.5px;background:#18bc9c;border-radius:3px"></div>
<svg style="left:1311.3px;top:423.55px;" width="10" height="10" viewBox="0 0 10 10"><circle cx="5" cy="5" r="4.9" fill="#fff"/><rect x="3.4" y="3.4" width="3.2" height="3.2" fill="#18bc9c"/></svg>
<div class="t" style="left:1324.5px;top:423.15px;font-size:11px;color:#fff;">关闭提示音</div>
<div class="a" style="left:1402.3px;top:418.15px;width:20.7px;height:20.7px;background:#18bc9c;border-radius:3px"></div>
<svg style="left:1408px;top:423.15px;" width="10" height="10" viewBox="0 0 10 10"><path d="M0 10 L0.7 6.6 L6.6 0.7 L9.3 3.4 L3.4 9.3 Z" fill="#fff"/><path d="M0.9 7 L3 9.1" stroke="#18bc9c" stroke-width="0.7"/><path d="M6 1.8 L8.2 4" stroke="#18bc9c" stroke-width="0.7"/></svg>
<div class="a" style="left:1427.3px;top:418.15px;width:20.7px;height:20.7px;background:#e74c3c;border-radius:3px"></div>
<svg style="left:1433px;top:423.25px;" width="9" height="10" viewBox="0 0 9 10"><rect x="0" y="1.4" width="9" height="1.3" fill="#fff"/><path d="M3 1.4 L3.4 0 L5.6 0 L6 1.4 Z" fill="#fff"/><path d="M0.8 2.9 L8.2 2.9 L7.7 10 L1.3 10 Z" fill="#fff"/><rect x="2.7" y="4" width="0.8" height="4.6" fill="#e74c3c"/><rect x="4.1" y="4" width="0.8" height="4.6" fill="#e74c3c"/><rect x="5.5" y="4" width="0.8" height="4.6" fill="#e74c3c"/></svg>
<div class="t c" style="left:261.30px;top:458.92px;font-size:13px;color:#333;width:69.30px;-webkit-text-stroke-width:0.08px;">dada</div>
<div class="t c" style="left:373.70px;top:458.92px;font-size:13px;color:#333;width:107.90px;">央行数字人民币</div>
<div class="a" style="left:490.05px;top:458.12px;width:31px;height:16px;background:#e74c3c;border-radius:3px"></div>
<div class="t c" style="left:490.05px;top:461.92px;font-size:10px;color:#fff;font-weight:bold;-webkit-text-stroke-width:0;width:31px;-webkit-text-stroke-width:0.25px;">买涨</div>
<div class="t c" style="left:529.50px;top:458.92px;font-size:13px;color:#333;width:77.80px;-webkit-text-stroke-width:0.08px;">1000.00</div>
<div class="t c" style="left:607.30px;top:458.92px;font-size:13px;color:#333;width:81.90px;-webkit-text-stroke-width:0.08px;">9000.00</div>
<div class="t c" style="left:689.20px;top:458.92px;font-size:13px;color:#333;width:79.50px;-webkit-text-stroke-width:0.08px;">65.4787</div>
<div class="t c" style="left:768.70px;top:458.92px;font-size:13px;color:#333;width:77.60px;-webkit-text-stroke-width:0.08px;">65.4717</div>
<div class="t c" style="left:846.30px;top:458.92px;font-size:13px;color:#333;width:138.30px;-webkit-text-stroke-width:0.08px;">2025-07-23 11:56:52</div>
<div class="t c" style="left:984.60px;top:458.92px;font-size:13px;color:#333;width:137.90px;-webkit-text-stroke-width:0.08px;">2025-07-23 11:59:52</div>
<div class="t c" style="left:1122.50px;top:458.92px;font-size:13px;color:#333;width:49.00px;-webkit-text-stroke-width:0.08px;">180/3</div>
<div class="t c" style="left:1171.50px;top:458.92px;font-size:13px;color:#333;width:59.80px;-webkit-text-stroke-width:0.08px;">-30</div>
<div class="a" style="left:1244px;top:458.12px;width:41px;height:15.6px;background:#e74c3c;border-radius:3px"></div>
<div class="t c" style="left:1244px;top:461.92px;font-size:10px;color:#fff;font-weight:bold;-webkit-text-stroke-width:0;width:41px;-webkit-text-stroke-width:0.25px;">已平仓</div>
<div class="a" style="left:1305px;top:455.72px;width:80px;height:20.5px;background:#18bc9c;border-radius:3px"></div>
<svg style="left:1311.3px;top:461.02px;" width="10" height="10" viewBox="0 0 10 10"><circle cx="5" cy="5" r="4.9" fill="#fff"/><rect x="3.4" y="3.4" width="3.2" height="3.2" fill="#18bc9c"/></svg>
<div class="t" style="left:1324.5px;top:460.62px;font-size:11px;color:#fff;">关闭提示音</div>
<div class="a" style="left:1402.3px;top:455.62px;width:20.7px;height:20.7px;background:#18bc9c;border-radius:3px"></div>
<svg style="left:1408px;top:460.62px;" width="10" height="10" viewBox="0 0 10 10"><path d="M0 10 L0.7 6.6 L6.6 0.7 L9.3 3.4 L3.4 9.3 Z" fill="#fff"/><path d="M0.9 7 L3 9.1" stroke="#18bc9c" stroke-width="0.7"/><path d="M6 1.8 L8.2 4" stroke="#18bc9c" stroke-width="0.7"/></svg>
<div class="a" style="left:1427.3px;top:455.62px;width:20.7px;height:20.7px;background:#e74c3c;border-radius:3px"></div>
<svg style="left:1433px;top:460.72px;" width="9" height="10" viewBox="0 0 9 10"><rect x="0" y="1.4" width="9" height="1.3" fill="#fff"/><path d="M3 1.4 L3.4 0 L5.6 0 L6 1.4 Z" fill="#fff"/><path d="M0.8 2.9 L8.2 2.9 L7.7 10 L1.3 10 Z" fill="#fff"/><rect x="2.7" y="4" width="0.8" height="4.6" fill="#e74c3c"/><rect x="4.1" y="4" width="0.8" height="4.6" fill="#e74c3c"/><rect x="5.5" y="4" width="0.8" height="4.6" fill="#e74c3c"/></svg>
<div class="t c" style="left:261.30px;top:496.38px;font-size:13px;color:#333;width:69.30px;">周我姑</div>
<div class="t c" style="left:373.70px;top:496.38px;font-size:13px;color:#333;width:107.90px;">国际黄金</div>
<div class="a" style="left:490.05px;top:495.58px;width:31px;height:16px;background:#e74c3c;border-radius:3px"></div>
<div class="t c" style="left:490.05px;top:499.38px;font-size:10px;color:#fff;font-weight:bold;-webkit-text-stroke-width:0;width:31px;-webkit-text-stroke-width:0.25px;">买涨</div>
<div class="t c" style="left:529.50px;top:496.38px;font-size:13px;color:#333;width:77.80px;-webkit-text-stroke-width:0.08px;">300000.00</div>
<div class="t c" style="left:607.30px;top:496.38px;font-size:13px;color:#333;width:81.90px;-webkit-text-stroke-width:0.08px;">675900.00</div>
<div class="t c" style="left:689.20px;top:496.38px;font-size:13px;color:#333;width:79.50px;-webkit-text-stroke-width:0.08px;">3350.2502</div>
<div class="t c" style="left:768.70px;top:496.38px;font-size:13px;color:#333;width:77.60px;-webkit-text-stroke-width:0.08px;">3350.2452</div>
<div class="t c" style="left:846.30px;top:496.38px;font-size:13px;color:#333;width:138.30px;-webkit-text-stroke-width:0.08px;">2025-07-14 20:52:51</div>
<div class="t c" style="left:984.60px;top:496.38px;font-size:13px;color:#333;width:137.90px;-webkit-text-stroke-width:0.08px;">2025-07-14 20:56:51</div>
<div class="t c" style="left:1122.50px;top:496.38px;font-size:13px;color:#333;width:49.00px;-webkit-text-stroke-width:0.08px;">240/5</div>
<div class="t c" style="left:1171.50px;top:496.38px;font-size:13px;color:#333;width:59.80px;-webkit-text-stroke-width:0.08px;">-15000</div>
<div class="a" style="left:1244px;top:495.58px;width:41px;height:15.6px;background:#e74c3c;border-radius:3px"></div>
<div class="t c" style="left:1244px;top:499.38px;font-size:10px;color:#fff;font-weight:bold;-webkit-text-stroke-width:0;width:41px;-webkit-text-stroke-width:0.25px;">已平仓</div>
<div class="a" style="left:1316.2px;top:493.08px;width:57.5px;height:20.7px;background:#18bc9c;opacity:.65;border-radius:3px"></div>
<svg style="left:1321.5px;top:498.49px;" width="10" height="10" viewBox="0 0 10 10"><circle cx="5" cy="5" r="4.9" fill="#fff"/><rect x="3.4" y="3.4" width="3.2" height="3.2" fill="#6fd3bf"/></svg>
<div class="t" style="left:1335px;top:498.08px;font-size:11px;color:#fff;">已关闭</div>
<div class="a" style="left:1402.3px;top:493.08px;width:20.7px;height:20.7px;background:#18bc9c;border-radius:3px"></div>
<svg style="left:1408px;top:498.08px;" width="10" height="10" viewBox="0 0 10 10"><path d="M0 10 L0.7 6.6 L6.6 0.7 L9.3 3.4 L3.4 9.3 Z" fill="#fff"/><path d="M0.9 7 L3 9.1" stroke="#18bc9c" stroke-width="0.7"/><path d="M6 1.8 L8.2 4" stroke="#18bc9c" stroke-width="0.7"/></svg>
<div class="a" style="left:1427.3px;top:493.08px;width:20.7px;height:20.7px;background:#e74c3c;border-radius:3px"></div>
<svg style="left:1433px;top:498.19px;" width="9" height="10" viewBox="0 0 9 10"><rect x="0" y="1.4" width="9" height="1.3" fill="#fff"/><path d="M3 1.4 L3.4 0 L5.6 0 L6 1.4 Z" fill="#fff"/><path d="M0.8 2.9 L8.2 2.9 L7.7 10 L1.3 10 Z" fill="#fff"/><rect x="2.7" y="4" width="0.8" height="4.6" fill="#e74c3c"/><rect x="4.1" y="4" width="0.8" height="4.6" fill="#e74c3c"/><rect x="5.5" y="4" width="0.8" height="4.6" fill="#e74c3c"/></svg>
<div class="t c" style="left:261.30px;top:533.86px;font-size:13px;color:#333;width:69.30px;">都是</div>
<div class="t c" style="left:373.70px;top:533.86px;font-size:13px;color:#333;width:107.90px;">央行数字人民币</div>
<div class="a" style="left:490.05px;top:533.06px;width:31px;height:16px;background:#18bc9c;border-radius:3px"></div>
<div class="t c" style="left:490.05px;top:536.86px;font-size:10px;color:#fff;font-weight:bold;-webkit-text-stroke-width:0;width:31px;-webkit-text-stroke-width:0.25px;">买跌</div>
<div class="t c" style="left:529.50px;top:533.86px;font-size:13px;color:#333;width:77.80px;-webkit-text-stroke-width:0.08px;">300000.00</div>
<div class="t c" style="left:607.30px;top:533.86px;font-size:13px;color:#333;width:81.90px;-webkit-text-stroke-width:0.08px;">197000.00</div>
<div class="t c" style="left:689.20px;top:533.86px;font-size:13px;color:#333;width:79.50px;-webkit-text-stroke-width:0.08px;">67.6901</div>
<div class="t c" style="left:768.70px;top:533.86px;font-size:13px;color:#333;width:77.60px;-webkit-text-stroke-width:0.08px;">67.6821</div>
<div class="t c" style="left:846.30px;top:533.86px;font-size:13px;color:#333;width:138.30px;-webkit-text-stroke-width:0.08px;">2025-07-14 20:46:32</div>
<div class="t c" style="left:984.60px;top:533.86px;font-size:13px;color:#333;width:137.90px;-webkit-text-stroke-width:0.08px;">2025-07-14 20:50:32</div>
<div class="t c" style="left:1122.50px;top:533.86px;font-size:13px;color:#333;width:49.00px;-webkit-text-stroke-width:0.08px;">240/5</div>
<div class="t c" style="left:1171.50px;top:533.86px;font-size:13px;color:#333;width:59.80px;-webkit-text-stroke-width:0.08px;">315000</div>
<div class="a" style="left:1244px;top:533.06px;width:41px;height:15.6px;background:#e74c3c;border-radius:3px"></div>
<div class="t c" style="left:1244px;top:536.86px;font-size:10px;color:#fff;font-weight:bold;-webkit-text-stroke-width:0;width:41px;-webkit-text-stroke-width:0.25px;">已平仓</div>
<div class="a" style="left:1316.2px;top:530.56px;width:57.5px;height:20.7px;background:#18bc9c;opacity:.65;border-radius:3px"></div>
<svg style="left:1321.5px;top:535.96px;" width="10" height="10" viewBox="0 0 10 10"><circle cx="5" cy="5" r="4.9" fill="#fff"/><rect x="3.4" y="3.4" width="3.2" height="3.2" fill="#6fd3bf"/></svg>
<div class="t" style="left:1335px;top:535.56px;font-size:11px;color:#fff;">已关闭</div>
<div class="a" style="left:1402.3px;top:530.56px;width:20.7px;height:20.7px;background:#18bc9c;border-radius:3px"></div>
<svg style="left:1408px;top:535.56px;" width="10" height="10" viewBox="0 0 10 10"><path d="M0 10 L0.7 6.6 L6.6 0.7 L9.3 3.4 L3.4 9.3 Z" fill="#fff"/><path d="M0.9 7 L3 9.1" stroke="#18bc9c" stroke-width="0.7"/><path d="M6 1.8 L8.2 4" stroke="#18bc9c" stroke-width="0.7"/></svg>
<div class="a" style="left:1427.3px;top:530.56px;width:20.7px;height:20.7px;background:#e74c3c;border-radius:3px"></div>
<svg style="left:1433px;top:535.65px;" width="9" height="10" viewBox="0 0 9 10"><rect x="0" y="1.4" width="9" height="1.3" fill="#fff"/><path d="M3 1.4 L3.4 0 L5.6 0 L6 1.4 Z" fill="#fff"/><path d="M0.8 2.9 L8.2 2.9 L7.7 10 L1.3 10 Z" fill="#fff"/><rect x="2.7" y="4" width="0.8" height="4.6" fill="#e74c3c"/><rect x="4.1" y="4" width="0.8" height="4.6" fill="#e74c3c"/><rect x="5.5" y="4" width="0.8" height="4.6" fill="#e74c3c"/></svg>
<div class="t c" style="left:261.30px;top:571.32px;font-size:13px;color:#333;width:69.30px;">周我姑</div>
<div class="t c" style="left:373.70px;top:571.32px;font-size:13px;color:#333;width:107.90px;">央行数字人民币</div>
<div class="a" style="left:490.05px;top:570.52px;width:31px;height:16px;background:#e74c3c;border-radius:3px"></div>
<div class="t c" style="left:490.05px;top:574.32px;font-size:10px;color:#fff;font-weight:bold;-webkit-text-stroke-width:0;width:31px;-webkit-text-stroke-width:0.25px;">买涨</div>
<div class="t c" style="left:529.50px;top:571.32px;font-size:13px;color:#333;width:77.80px;-webkit-text-stroke-width:0.08px;">300000.00</div>
<div class="t c" style="left:607.30px;top:571.32px;font-size:13px;color:#333;width:81.90px;-webkit-text-stroke-width:0.08px;">399900.00</div>
<div class="t c" style="left:689.20px;top:571.32px;font-size:13px;color:#333;width:79.50px;-webkit-text-stroke-width:0.08px;">67.6607</div>
<div class="t c" style="left:768.70px;top:571.32px;font-size:13px;color:#333;width:77.60px;-webkit-text-stroke-width:0.08px;">67.6537</div>
<div class="t c" style="left:846.30px;top:571.32px;font-size:13px;color:#333;width:138.30px;-webkit-text-stroke-width:0.08px;">2025-07-14 20:45:21</div>
<div class="t c" style="left:984.60px;top:571.32px;font-size:13px;color:#333;width:137.90px;-webkit-text-stroke-width:0.08px;">2025-07-14 20:49:21</div>
<div class="t c" style="left:1122.50px;top:571.32px;font-size:13px;color:#333;width:49.00px;-webkit-text-stroke-width:0.08px;">240/5</div>
<div class="t c" style="left:1171.50px;top:571.32px;font-size:13px;color:#333;width:59.80px;-webkit-text-stroke-width:0.08px;">-15000</div>
<div class="a" style="left:1244px;top:570.52px;width:41px;height:15.6px;background:#e74c3c;border-radius:3px"></div>
<div class="t c" style="left:1244px;top:574.32px;font-size:10px;color:#fff;font-weight:bold;-webkit-text-stroke-width:0;width:41px;-webkit-text-stroke-width:0.25px;">已平仓</div>
<div class="a" style="left:1316.2px;top:568.02px;width:57.5px;height:20.7px;background:#18bc9c;opacity:.65;border-radius:3px"></div>
<svg style="left:1321.5px;top:573.42px;" width="10" height="10" viewBox="0 0 10 10"><circle cx="5" cy="5" r="4.9" fill="#fff"/><rect x="3.4" y="3.4" width="3.2" height="3.2" fill="#6fd3bf"/></svg>
<div class="t" style="left:1335px;top:573.02px;font-size:11px;color:#fff;">已关闭</div>
<div class="a" style="left:1402.3px;top:568.02px;width:20.7px;height:20.7px;background:#18bc9c;border-radius:3px"></div>
<svg style="left:1408px;top:573.02px;" width="10" height="10" viewBox="0 0 10 10"><path d="M0 10 L0.7 6.6 L6.6 0.7 L9.3 3.4 L3.4 9.3 Z" fill="#fff"/><path d="M0.9 7 L3 9.1" stroke="#18bc9c" stroke-width="0.7"/><path d="M6 1.8 L8.2 4" stroke="#18bc9c" stroke-width="0.7"/></svg>
<div class="a" style="left:1427.3px;top:568.02px;width:20.7px;height:20.7px;background:#e74c3c;border-radius:3px"></div>
<svg style="left:1433px;top:573.12px;" width="9" height="10" viewBox="0 0 9 10"><rect x="0" y="1.4" width="9" height="1.3" fill="#fff"/><path d="M3 1.4 L3.4 0 L5.6 0 L6 1.4 Z" fill="#fff"/><path d="M0.8 2.9 L8.2 2.9 L7.7 10 L1.3 10 Z" fill="#fff"/><rect x="2.7" y="4" width="0.8" height="4.6" fill="#e74c3c"/><rect x="4.1" y="4" width="0.8" height="4.6" fill="#e74c3c"/><rect x="5.5" y="4" width="0.8" height="4.6" fill="#e74c3c"/></svg>
<div class="t c" style="left:261.30px;top:608.79px;font-size:13px;color:#333;width:69.30px;">都是</div>
<div class="t c" style="left:373.70px;top:608.79px;font-size:13px;color:#333;width:107.90px;">央行数字人民币</div>
<div class="a" style="left:490.05px;top:608.00px;width:31px;height:16px;background:#e74c3c;border-radius:3px"></div>
<div class="t c" style="left:490.05px;top:611.79px;font-size:10px;color:#fff;font-weight:bold;-webkit-text-stroke-width:0;width:31px;-webkit-text-stroke-width:0.25px;">买涨</div>
<div class="t c" style="left:529.50px;top:608.79px;font-size:13px;color:#333;width:77.80px;-webkit-text-stroke-width:0.08px;">3000.00</div>
<div class="t c" style="left:607.30px;top:608.79px;font-size:13px;color:#333;width:81.90px;-webkit-text-stroke-width:0.08px;">497000.00</div>
<div class="t c" style="left:689.20px;top:608.79px;font-size:13px;color:#333;width:79.50px;-webkit-text-stroke-width:0.08px;">67.6586</div>
<div class="t c" style="left:768.70px;top:608.79px;font-size:13px;color:#333;width:77.60px;-webkit-text-stroke-width:0.08px;">67.6576</div>
<div class="t c" style="left:846.30px;top:608.79px;font-size:13px;color:#333;width:138.30px;-webkit-text-stroke-width:0.08px;">2025-07-14 20:45:17</div>
<div class="t c" style="left:984.60px;top:608.79px;font-size:13px;color:#333;width:137.90px;-webkit-text-stroke-width:0.08px;">2025-07-14 20:48:17</div>
<div class="t c" style="left:1122.50px;top:608.79px;font-size:13px;color:#333;width:49.00px;-webkit-text-stroke-width:0.08px;">180/3</div>
<div class="t c" style="left:1171.50px;top:608.79px;font-size:13px;color:#333;width:59.80px;-webkit-text-stroke-width:0.08px;">-90</div>
<div class="a" style="left:1244px;top:608.00px;width:41px;height:15.6px;background:#e74c3c;border-radius:3px"></div>
<div class="t c" style="left:1244px;top:611.79px;font-size:10px;color:#fff;font-weight:bold;-webkit-text-stroke-width:0;width:41px;-webkit-text-stroke-width:0.25px;">已平仓</div>
<div class="a" style="left:1316.2px;top:605.50px;width:57.5px;height:20.7px;background:#18bc9c;opacity:.65;border-radius:3px"></div>
<svg style="left:1321.5px;top:610.89px;" width="10" height="10" viewBox="0 0 10 10"><circle cx="5" cy="5" r="4.9" fill="#fff"/><rect x="3.4" y="3.4" width="3.2" height="3.2" fill="#6fd3bf"/></svg>
<div class="t" style="left:1335px;top:610.50px;font-size:11px;color:#fff;">已关闭</div>
<div class="a" style="left:1402.3px;top:605.50px;width:20.7px;height:20.7px;background:#18bc9c;border-radius:3px"></div>
<svg style="left:1408px;top:610.50px;" width="10" height="10" viewBox="0 0 10 10"><path d="M0 10 L0.7 6.6 L6.6 0.7 L9.3 3.4 L3.4 9.3 Z" fill="#fff"/><path d="M0.9 7 L3 9.1" stroke="#18bc9c" stroke-width="0.7"/><path d="M6 1.8 L8.2 4" stroke="#18bc9c" stroke-width="0.7"/></svg>
<div class="a" style="left:1427.3px;top:605.50px;width:20.7px;height:20.7px;background:#e74c3c;border-radius:3px"></div>
<svg style="left:1433px;top:610.59px;" width="9" height="10" viewBox="0 0 9 10"><rect x="0" y="1.4" width="9" height="1.3" fill="#fff"/><path d="M3 1.4 L3.4 0 L5.6 0 L6 1.4 Z" fill="#fff"/><path d="M0.8 2.9 L8.2 2.9 L7.7 10 L1.3 10 Z" fill="#fff"/><rect x="2.7" y="4" width="0.8" height="4.6" fill="#e74c3c"/><rect x="4.1" y="4" width="0.8" height="4.6" fill="#e74c3c"/><rect x="5.5" y="4" width="0.8" height="4.6" fill="#e74c3c"/></svg>
<div class="t c" style="left:261.30px;top:646.26px;font-size:13px;color:#333;width:69.30px;">周我姑</div>
<div class="t c" style="left:373.70px;top:646.26px;font-size:13px;color:#333;width:107.90px;">央行数字人民币</div>
<div class="a" style="left:490.05px;top:645.47px;width:31px;height:16px;background:#e74c3c;border-radius:3px"></div>
<div class="t c" style="left:490.05px;top:649.26px;font-size:10px;color:#fff;font-weight:bold;-webkit-text-stroke-width:0;width:31px;-webkit-text-stroke-width:0.25px;">买涨</div>
<div class="t c" style="left:529.50px;top:646.26px;font-size:13px;color:#333;width:77.80px;-webkit-text-stroke-width:0.08px;">300000.00</div>
<div class="t c" style="left:607.30px;top:646.26px;font-size:13px;color:#333;width:81.90px;-webkit-text-stroke-width:0.08px;">699900.00</div>
<div class="t c" style="left:689.20px;top:646.26px;font-size:13px;color:#333;width:79.50px;-webkit-text-stroke-width:0.08px;">67.6582</div>
<div class="t c" style="left:768.70px;top:646.26px;font-size:13px;color:#333;width:77.60px;-webkit-text-stroke-width:0.08px;">66.9582</div>
<div class="t c" style="left:846.30px;top:646.26px;font-size:13px;color:#333;width:138.30px;-webkit-text-stroke-width:0.08px;">2025-07-14 20:45:09</div>
<div class="t c" style="left:984.60px;top:646.26px;font-size:13px;color:#333;width:137.90px;-webkit-text-stroke-width:0.08px;">2025-07-14 20:48:09</div>
<div class="t c" style="left:1122.50px;top:646.26px;font-size:13px;color:#333;width:49.00px;-webkit-text-stroke-width:0.08px;">180/3</div>
<div class="t c" style="left:1171.50px;top:646.26px;font-size:13px;color:#333;width:59.80px;-webkit-text-stroke-width:0.08px;">-9000</div>
<div class="a" style="left:1244px;top:645.47px;width:41px;height:15.6px;background:#e74c3c;border-radius:3px"></div>
<div class="t c" style="left:1244px;top:649.26px;font-size:10px;color:#fff;font-weight:bold;-webkit-text-stroke-width:0;width:41px;-webkit-text-stroke-width:0.25px;">已平仓</div>
<div class="a" style="left:1316.2px;top:642.97px;width:57.5px;height:20.7px;background:#18bc9c;opacity:.65;border-radius:3px"></div>
<svg style="left:1321.5px;top:648.37px;" width="10" height="10" viewBox="0 0 10 10"><circle cx="5" cy="5" r="4.9" fill="#fff"/><rect x="3.4" y="3.4" width="3.2" height="3.2" fill="#6fd3bf"/></svg>
<div class="t" style="left:1335px;top:647.97px;font-size:11px;color:#fff;">已关闭</div>
<div class="a" style="left:1402.3px;top:642.97px;width:20.7px;height:20.7px;background:#18bc9c;border-radius:3px"></div>
<svg style="left:1408px;top:647.97px;" width="10" height="10" viewBox="0 0 10 10"><path d="M0 10 L0.7 6.6 L6.6 0.7 L9.3 3.4 L3.4 9.3 Z" fill="#fff"/><path d="M0.9 7 L3 9.1" stroke="#18bc9c" stroke-width="0.7"/><path d="M6 1.8 L8.2 4" stroke="#18bc9c" stroke-width="0.7"/></svg>
<div class="a" style="left:1427.3px;top:642.97px;width:20.7px;height:20.7px;background:#e74c3c;border-radius:3px"></div>
<svg style="left:1433px;top:648.06px;" width="9" height="10" viewBox="0 0 9 10"><rect x="0" y="1.4" width="9" height="1.3" fill="#fff"/><path d="M3 1.4 L3.4 0 L5.6 0 L6 1.4 Z" fill="#fff"/><path d="M0.8 2.9 L8.2 2.9 L7.7 10 L1.3 10 Z" fill="#fff"/><rect x="2.7" y="4" width="0.8" height="4.6" fill="#e74c3c"/><rect x="4.1" y="4" width="0.8" height="4.6" fill="#e74c3c"/><rect x="5.5" y="4" width="0.8" height="4.6" fill="#e74c3c"/></svg>
<div class="a" style="left:1240px;top:306px;width:47.5px;height:18.3px;background:#fff;border:1px solid #333;border-radius:2px"></div>
<div class="t" style="left:1245.5px;top:309.30px;font-size:13px;color:#3a3a3a;-webkit-text-stroke-width:0;">默认</div>
<svg style="left:1274.7px;top:312.5px;" width="9" height="6" viewBox="0 0 9 6"><path d="M1 1 L4.5 4.6 L8 1" fill="none" stroke="#111" stroke-width="1.9"/></svg>
<div class="a" style="left:1240px;top:324px;width:47.5px;height:83.5px;background:#fff;border:1px solid #767676"></div>
<div class="a" style="left:1241px;top:325.2px;width:45.5px;height:27.3px;background:#1a62d2"></div>
<div class="t" style="left:1245.5px;top:334.30px;font-size:13px;color:#fff;">默认</div>
<div class="t" style="left:1245.5px;top:361.30px;font-size:13px;color:#444;-webkit-text-stroke-width:0;">赢</div>
<div class="t" style="left:1245.5px;top:388.40px;font-size:13px;color:#444;-webkit-text-stroke-width:0;">亏</div>
<svg style="left:264px;top:676.5px;" width="5.5" height="8.5" viewBox="0 0 5.5 8.5"><path d="M5.5 0 L0 4.25 L5.5 8.5 Z" fill="#8a8a8a"/></svg>
<div class="a" style="left:442px;top:676px;width:997px;height:9px;background:#8a8a8a;border-radius:4.5px"></div>
<svg style="left:1446px;top:676.5px;" width="5.5" height="8.5" viewBox="0 0 5.5 8.5"><path d="M0 0 L5.5 4.25 L0 8.5 Z" fill="#8a8a8a"/></svg>
<div class="t" style="left:259.8px;top:708.00px;font-size:13px;color:#333;">显示第 1 到第 10 条记录，总共 71 条记录 每页显示</div>
<div class="a" style="left:559.2px;top:700.3px;width:50.7px;height:30.3px;background:#f4f4f4;border:1px solid #ddd;border-radius:3px"></div>
<div class="t" style="left:573.5px;top:709.00px;font-size:13px;color:#333;-webkit-text-stroke-width:0.08px;">10</div>
<svg style="left:589.3px;top:713.3px;" width="8" height="5" viewBox="0 0 8 5"><path d="M0 4.5 L4 0.5 L8 4.5 Z" fill="#333"/></svg>
<div class="t" style="left:614.5px;top:708.00px;font-size:13px;color:#333;">条记录</div>
<div class="a" style="left:1099.4px;top:698.1px;width:356.79999999999995px;height:31.6px;background:#fafafa;border:1px solid #ddd;border-radius:4px"></div>
<div class="t c" style="left:1099.4px;top:707.20px;font-size:13px;color:#666;width:63.60px;">上一页</div>
<div class="a" style="left:1162.50px;top:698.1px;width:1px;height:31.6px;background:#ddd"></div>
<div class="a" style="left:1163px;top:698.1px;width:33px;height:31.6px;background:#2c3e50"></div>
<div class="t c" style="left:1163px;top:707.60px;font-size:13px;color:#fff;font-weight:bold;-webkit-text-stroke-width:0;width:33.00px;">1</div>
<div class="a" style="left:1195.50px;top:698.1px;width:1px;height:31.6px;background:#ddd"></div>
<div class="t c" style="left:1196px;top:707.20px;font-size:13px;color:#666;width:31.50px;-webkit-text-stroke-width:0.08px;">2</div>
<div class="a" style="left:1227.00px;top:698.1px;width:1px;height:31.6px;background:#ddd"></div>
<div class="t c" style="left:1227.5px;top:707.20px;font-size:13px;color:#666;width:32.20px;-webkit-text-stroke-width:0.08px;">3</div>
<div class="a" style="left:1259.20px;top:698.1px;width:1px;height:31.6px;background:#ddd"></div>
<div class="t c" style="left:1259.7px;top:707.20px;font-size:13px;color:#666;width:33.10px;-webkit-text-stroke-width:0.08px;">4</div>
<div class="a" style="left:1292.30px;top:698.1px;width:1px;height:31.6px;background:#ddd"></div>
<div class="t c" style="left:1292.8px;top:707.20px;font-size:13px;color:#666;width:31.60px;-webkit-text-stroke-width:0.08px;">5</div>
<div class="a" style="left:1323.90px;top:698.1px;width:1px;height:31.6px;background:#ddd"></div>
<div class="a" style="left:1324.4px;top:699.1px;width:35.799999999999955px;height:29.6px;background:#fff"></div>
<div class="t c" style="left:1324.4px;top:707.20px;font-size:13px;color:#666;width:36.30px;-webkit-text-stroke-width:0.08px;">...</div>
<div class="a" style="left:1360.20px;top:698.1px;width:1px;height:31.6px;background:#ddd"></div>
<div class="t c" style="left:1360.7px;top:707.20px;font-size:13px;color:#666;width:32.00px;-webkit-text-stroke-width:0.08px;">8</div>
<div class="a" style="left:1392.20px;top:698.1px;width:1px;height:31.6px;background:#ddd"></div>
<div class="t c" style="left:1392.7px;top:707.20px;font-size:13px;color:#666;width:63.50px;">下一页</div>
</body></html>
